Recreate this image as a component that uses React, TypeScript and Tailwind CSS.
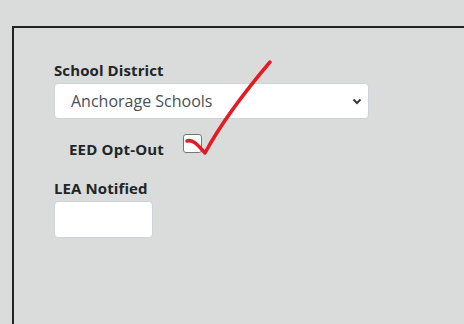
const App = () => {
  return (
    <div className="relative min-h-screen bg-[#dadcdb] pl-[12px] pt-[26px] font-['Open_Sans','Noto_Sans',sans-serif]">
      <div className="h-[298px] border-l-2 border-t-2 border-[#232326] pl-[40px] pt-[31px]">
        <label className="block text-[15px] font-bold leading-[22px] tracking-[0.1px] text-[#212529]">School District</label>
        <div className="relative mt-[2px] w-[315px]">
          <select
            className="h-[36px] w-full appearance-none rounded-[4px] border border-[#ced4da] bg-white pl-[16px] text-[16px] text-[#495057]"
            defaultValue="anchorage"
          >
            <option value="anchorage">Anchorage Schools</option>
          </select>
          <svg className="pointer-events-none absolute right-[7px] top-[15px]" width="10" height="7" viewBox="0 0 10 7">
            <path d="M1.5 1.5 L5 5 L8.5 1.5" fill="none" stroke="#343a40" strokeWidth="2" />
          </svg>
        </div>
        <div className="mt-[15px] flex items-start pl-[15px]">
          <span className="mt-[4px] text-[15px] font-bold leading-[22px] tracking-[0.2px] text-[#212529]">EED Opt-Out</span>
          <span className="ml-[19px] h-[19px] w-[19px] rounded-[3px] border border-[#767676] bg-white" />
        </div>
        <label className="mt-[17px] block text-[15px] font-bold leading-[22px] tracking-[0.1px] text-[#212529]">LEA Notified</label>
        <input className="mt-[2px] h-[37px] w-[99px] rounded-[4px] border border-[#ced4da] bg-white" />
      </div>
      <svg className="pointer-events-none absolute left-0 top-0" width="464" height="324" viewBox="0 0 464 324">
        <path
          d="M187 141 C193 139 198 145 205 153 Q226 114 270 62"
          fill="none"
          stroke="#e31b23"
          strokeWidth="3.5"
          strokeLinecap="round"
          strokeLinejoin="round"
        />
      </svg>
    </div>
  );
};

export default App;
